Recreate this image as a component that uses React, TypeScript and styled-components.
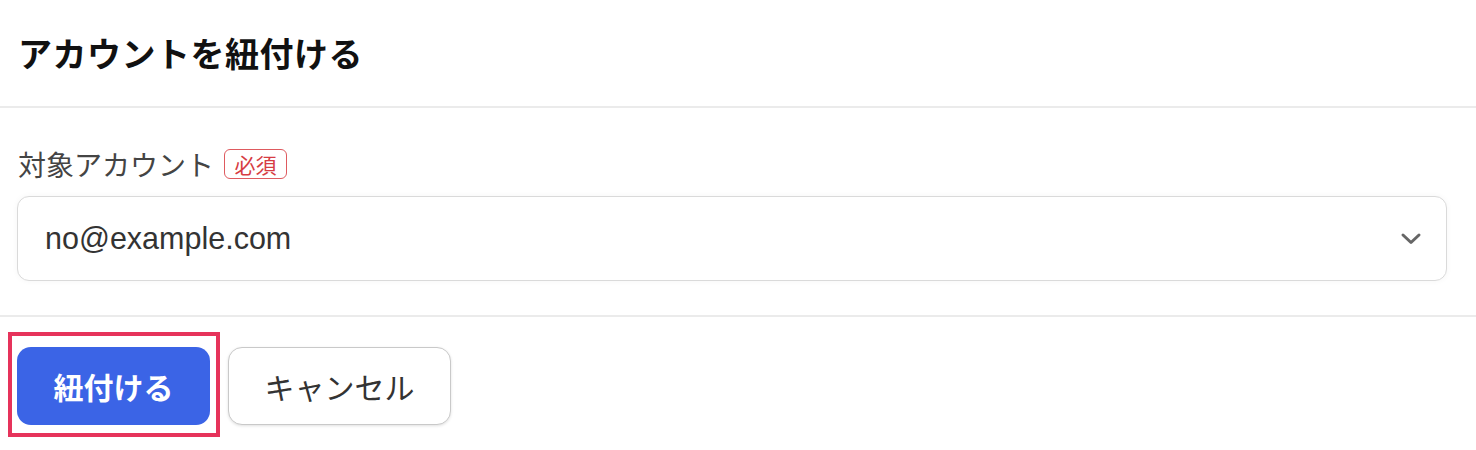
import styled, { createGlobalStyle } from 'styled-components';

const GlobalStyle = createGlobalStyle`
  html, body {
    margin: 0;
    padding: 0;
    background: #fff;
  }
  body {
    font-family: "Noto Sans CJK JP", "Liberation Sans", sans-serif;
    color: #222;
  }
`;

const Dialog = styled.div`
  width: 100%;
  display: flex;
  flex-direction: column;
`;

const Header = styled.header`
  height: 106px;
  display: flex;
  align-items: center;
  padding: 0 18px;
  border-bottom: 2px solid #ebebeb;
`;

const Title = styled.h1`
  margin: 0;
  font-size: 34px;
  font-weight: 700;
  line-height: 40px;
  letter-spacing: 0.5px;
  color: #111;
`;

const Body = styled.div`
  padding: 36px 29px 34px 17px;
  border-bottom: 2px solid #ebebeb;
  display: flex;
  flex-direction: column;
  gap: 12px;
`;

const Label = styled.label`
  display: flex;
  align-items: center;
  gap: 10px;
  height: 40px;
  padding-left: 1px;
  font-size: 28px;
  line-height: 40px;
  color: #444;
`;

const Required = styled.span`
  display: inline-block;
  font-size: 21px;
  line-height: 28px;
  padding: 0 9.5px;
  border: 1.5px solid #de5a5f;
  border-radius: 6px;
  color: #d63c43;
`;

const Select = styled.div`
  height: 85px;
  box-sizing: border-box;
  display: flex;
  align-items: center;
  justify-content: space-between;
  padding: 0 24px 0 27px;
  border: 1.5px solid #dadada;
  border-radius: 12px;
  background: #fff;
  box-shadow: 0 0 6px rgba(0, 0, 0, 0.04);
`;

const SelectValue = styled.span`
  font-family: "Liberation Sans", "Noto Sans CJK JP", sans-serif;
  font-size: 30.5px;
  color: #333;
`;

const Footer = styled.footer`
  padding: 30px 17px;
  display: flex;
  gap: 18px;
`;

const Focus = styled.div`
  position: relative;
  display: flex;
`;

const Highlight = styled.span`
  position: absolute;
  top: -15px;
  left: -9px;
  right: -10px;
  bottom: -12px;
  border: 4px solid #e6335b;
  pointer-events: none;
`;

const Button = styled.button<{ $primary?: boolean }>`
  height: 78px;
  box-sizing: border-box;
  border-radius: 14px;
  font-family: "Noto Sans CJK JP", sans-serif;
  font-size: 30px;
  font-weight: ${(p) => (p.$primary ? 700 : 400)};
  padding: 0;
  width: ${(p) => (p.$primary ? '193px' : '223px')};
  color: ${(p) => (p.$primary ? '#fff' : '#333')};
  background: ${(p) => (p.$primary ? '#3b64e6' : '#fff')};
  border: ${(p) => (p.$primary ? 'none' : '1.5px solid #c9c9c9')};
  box-shadow: ${(p) => (p.$primary ? 'none' : '0 1px 3px rgba(0,0,0,0.12)')};
  cursor: pointer;
`;

const Chevron = () => (
  <svg width="22" height="14" viewBox="0 0 22 14" fill="none">
    <path d="M3 3l8 7.5 8-7.5" stroke="#666" strokeWidth="3" strokeLinecap="round" strokeLinejoin="round" />
  </svg>
);

export default function App() {
  return (
    <Dialog>
      <GlobalStyle />
      <Header>
        <Title>アカウントを紐付ける</Title>
      </Header>
      <Body>
        <Label>
          対象アカウント
          <Required>必須</Required>
        </Label>
        <Select role="combobox">
          <SelectValue>no@example.com</SelectValue>
          <Chevron />
        </Select>
      </Body>
      <Footer>
        <Focus>
          <Button $primary>紐付ける</Button>
          <Highlight />
        </Focus>
        <Button>キャンセル</Button>
      </Footer>
    </Dialog>
  );
}
